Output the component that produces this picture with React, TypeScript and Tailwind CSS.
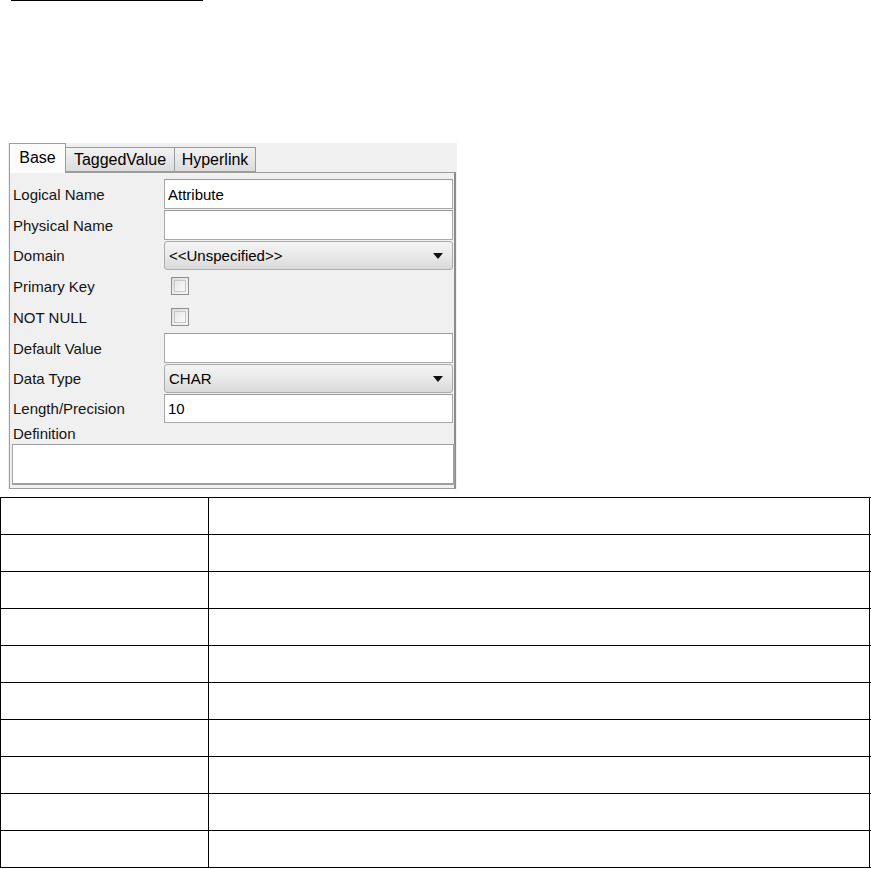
import React from "react";

const font = { fontFamily: '"Liberation Sans", Arial, sans-serif' };

function Label({ children }: { children: React.ReactNode }) {
  return <div className="flex items-center pl-[3px] text-[15px] text-[#141414] leading-none">{children}</div>;
}

function TextField({ value, h = "h-[30px]" }: { value?: string; h?: string }) {
  return (
    <div className={`${h} w-[289px] bg-white border border-[#a8a8a8] border-t-[#9a9a9a] flex items-center pl-[3px] text-[15px] text-black leading-none`}>
      {value}
    </div>
  );
}

function Combo({ value }: { value: string }) {
  return (
    <div className="h-[29px] w-[289px] rounded-[3px] border border-[#ababab] bg-gradient-to-b from-[#f4f4f4] via-[#e9e9e9] to-[#d9d9d9] flex items-center justify-between pl-[4px] pr-[9px] text-[15px] text-black leading-none">
      <span>{value}</span>
      <svg width="10" height="6" viewBox="0 0 10 6">
        <path d="M0 0 L10 0 L5 6 Z" fill="#111" />
      </svg>
    </div>
  );
}

function Check() {
  return (
    <div className="h-[30px] flex items-center pl-[7px]">
      <div className="w-[18px] h-[18px] border border-[#8e8f8f] bg-gradient-to-br from-[#dcdcdc] to-[#f8f8f8] p-[2px]">
        <div className="w-full h-full border border-[#c8c8c8] bg-gradient-to-br from-[#e6e6e6] to-[#fafafa]" />
      </div>
    </div>
  );
}

export default function App() {
  const rows = Array.from({ length: 10 });
  return (
    <div className="w-[871px] h-[869px] bg-white overflow-hidden" style={font}>
      <div className="ml-[11px] w-[192px] h-[1px] bg-black" />
      <div className="h-[142px]" />
      {/* dialog panel */}
      <div className="ml-[8px] w-[449px] bg-[#f0f0f0]">
        {/* tab strip */}
        <div className="h-[29px] flex items-end pl-[1px] relative">
          <div className="relative z-10 w-[57px] h-[30px] -mb-[1px] bg-[#fcfcfc] border border-b-0 border-[#9c9c9c] flex items-center justify-center text-[16px] text-black leading-none pb-[2px]">
            Base
          </div>
          <div className="w-[109px] h-[25px] border border-l-0 border-[#9c9c9c] bg-gradient-to-b from-[#f2f2f2] to-[#dcdcdc] flex items-center justify-center text-[16px] text-black leading-none">
            TaggedValue
          </div>
          <div className="w-[81px] h-[25px] border border-l-0 border-[#9c9c9c] bg-gradient-to-b from-[#f2f2f2] to-[#dcdcdc] flex items-center justify-center text-[16px] text-black leading-none">
            Hyperlink
          </div>
        </div>
        {/* content */}
        <div className="ml-[1px] w-[447px] h-[317px] border border-[#9c9c9c] border-r-[#8c8c8c] border-r-2 pt-[6px]">
          <div className="grid grid-cols-[154px_289px] gap-y-[1px]">
            <Label>Logical Name</Label>
            <TextField value="Attribute" />
            <Label>Physical Name</Label>
            <TextField />
            <Label>Domain</Label>
            <Combo value="<<Unspecified>>" />
            <Label>Primary Key</Label>
            <Check />
            <Label>NOT NULL</Label>
            <Check />
            <Label>Default Value</Label>
            <TextField />
            <Label>Data Type</Label>
            <Combo value="CHAR" />
            <Label>Length/Precision</Label>
            <TextField value="10" h="h-[29px]" />
          </div>
          <div className="h-[21px] flex items-center pl-[3px] text-[15px] text-[#141414] leading-none">Definition</div>
          <div className="ml-[2px] w-[443px] h-[41px] bg-white border border-[#a0a0a0] border-r-2 border-b-2" />
        </div>
      </div>
      <div className="h-[8px]" />
      {/* table */}
      <div className="w-[871px] border-t border-black">
        {rows.map((_, i) => (
          <div key={i} className="flex h-[37px] border-b border-black">
            <div className="w-[209px] border-l border-r border-black" />
            <div className="w-[661px] border-r border-black" />
          </div>
        ))}
      </div>
    </div>
  );
}
